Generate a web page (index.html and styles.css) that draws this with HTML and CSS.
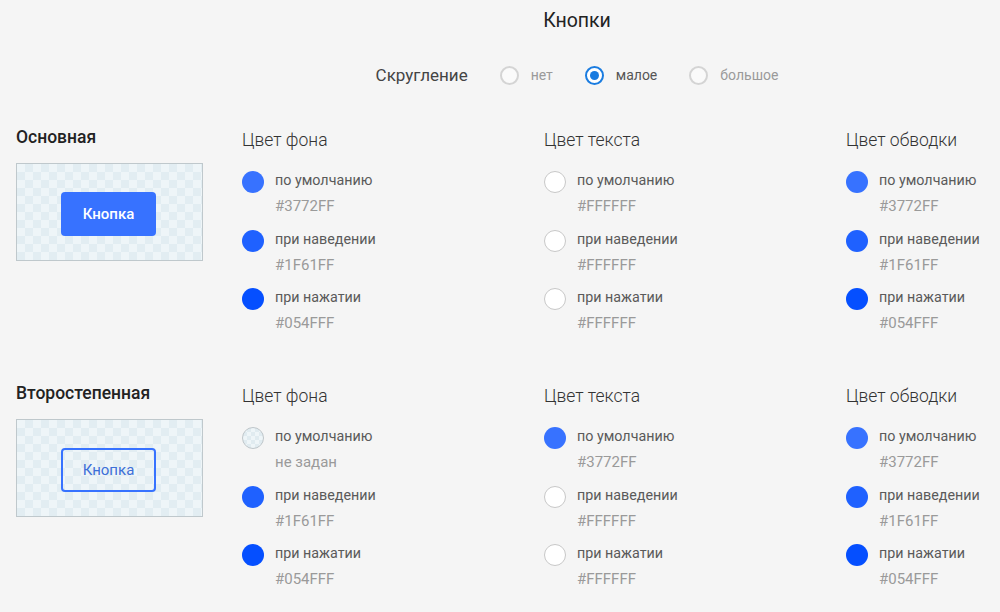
FILE: index.html
```html
<!DOCTYPE html>
<html lang="ru">
<head>
<meta charset="utf-8">
<link rel="stylesheet" href="styles.css">
</head>
<body>
<div class="page">
  <header class="header">
    <h1 class="title">Кнопки</h1>
    <div class="rounding">
      <span class="rounding-label">Скругление</span>
      <label class="radio"><span class="radio-dot"></span><span class="radio-text">нет</span></label>
      <label class="radio radio-on"><span class="radio-dot"></span><span class="radio-text">малое</span></label>
      <label class="radio"><span class="radio-dot"></span><span class="radio-text">большое</span></label>
    </div>
  </header>

  <section class="section">
    <div class="preview-col">
      <h2 class="section-title">Основная</h2>
      <div class="preview">
        <span class="btn btn-primary">Кнопка</span>
      </div>
    </div>
    <div class="cols">
      <div class="col">
        <h3 class="col-title">Цвет фона</h3>
        <div class="item"><span class="sw c1"></span><div><div class="lbl">по умолчанию</div><div class="val">#3772FF</div></div></div>
        <div class="item"><span class="sw c2"></span><div><div class="lbl">при наведении</div><div class="val">#1F61FF</div></div></div>
        <div class="item"><span class="sw c3"></span><div><div class="lbl">при нажатии</div><div class="val">#054FFF</div></div></div>
      </div>
      <div class="col">
        <h3 class="col-title">Цвет текста</h3>
        <div class="item"><span class="sw cw"></span><div><div class="lbl">по умолчанию</div><div class="val">#FFFFFF</div></div></div>
        <div class="item"><span class="sw cw"></span><div><div class="lbl">при наведении</div><div class="val">#FFFFFF</div></div></div>
        <div class="item"><span class="sw cw"></span><div><div class="lbl">при нажатии</div><div class="val">#FFFFFF</div></div></div>
      </div>
      <div class="col">
        <h3 class="col-title">Цвет обводки</h3>
        <div class="item"><span class="sw c1"></span><div><div class="lbl">по умолчанию</div><div class="val">#3772FF</div></div></div>
        <div class="item"><span class="sw c2"></span><div><div class="lbl">при наведении</div><div class="val">#1F61FF</div></div></div>
        <div class="item"><span class="sw c3"></span><div><div class="lbl">при нажатии</div><div class="val">#054FFF</div></div></div>
      </div>
    </div>
  </section>

  <section class="section">
    <div class="preview-col">
      <h2 class="section-title">Второстепенная</h2>
      <div class="preview">
        <span class="btn btn-secondary">Кнопка</span>
      </div>
    </div>
    <div class="cols">
      <div class="col">
        <h3 class="col-title">Цвет фона</h3>
        <div class="item"><span class="sw cnone"></span><div><div class="lbl">по умолчанию</div><div class="val">не задан</div></div></div>
        <div class="item"><span class="sw c2"></span><div><div class="lbl">при наведении</div><div class="val">#1F61FF</div></div></div>
        <div class="item"><span class="sw c3"></span><div><div class="lbl">при нажатии</div><div class="val">#054FFF</div></div></div>
      </div>
      <div class="col">
        <h3 class="col-title">Цвет текста</h3>
        <div class="item"><span class="sw c1"></span><div><div class="lbl">по умолчанию</div><div class="val">#3772FF</div></div></div>
        <div class="item"><span class="sw cw"></span><div><div class="lbl">при наведении</div><div class="val">#FFFFFF</div></div></div>
        <div class="item"><span class="sw cw"></span><div><div class="lbl">при нажатии</div><div class="val">#FFFFFF</div></div></div>
      </div>
      <div class="col">
        <h3 class="col-title">Цвет обводки</h3>
        <div class="item"><span class="sw c1"></span><div><div class="lbl">по умолчанию</div><div class="val">#3772FF</div></div></div>
        <div class="item"><span class="sw c2"></span><div><div class="lbl">при наведении</div><div class="val">#1F61FF</div></div></div>
        <div class="item"><span class="sw c3"></span><div><div class="lbl">при нажатии</div><div class="val">#054FFF</div></div></div>
      </div>
    </div>
  </section>
</div>
</body>
</html>
```

FILE: styles.css
```css
* { box-sizing: border-box; }
html, body { margin: 0; padding: 0; }
body {
  background: #f5f5f5;
  font-family: Roboto, "Liberation Sans", Arial, sans-serif;
  color: #333;
  width: 1000px;
  height: 612px;
  overflow: hidden;
}
.page { padding-top: 9px; }

.header {
  padding-left: 154px;
  display: flex;
  flex-direction: column;
  align-items: center;
}
.title {
  margin: 0;
  font-size: 19.5px;
  line-height: 24px;
  font-weight: 400;
  color: #222;
}
.rounding {
  margin-top: 30px;
  display: flex;
  align-items: center;
  height: 24px;
}
.rounding-label {
  font-size: 17px;
  color: #444;
  margin-right: 32px;
}
.radio {
  display: flex;
  align-items: center;
  margin-right: 32px;
}
.radio:last-child { margin-right: 0; }
.radio-dot {
  width: 19px;
  height: 19px;
  border-radius: 50%;
  border: 2px solid #d4d4d4;
  background: #fafafa;
  margin-right: 12px;
  position: relative;
}
.radio-text {
  font-size: 14px;
  color: #9a9a9a;
}
.radio-on .radio-dot {
  border-color: #1a7ce0;
  background: #fff;
}
.radio-on .radio-dot::after {
  content: "";
  position: absolute;
  left: 3px;
  top: 3px;
  width: 9px;
  height: 9px;
  border-radius: 50%;
  background: #1a7ce0;
}
.radio-on .radio-text { color: #555; }

.section {
  display: flex;
  align-items: flex-start;
  margin-top: 39px;
}
.section + .section { margin-top: 46px; }
.preview-col {
  width: 242px;
  padding-left: 16px;
}
.section-title {
  margin: 0;
  font-size: 17.5px;
  line-height: 22px;
  font-weight: 500;
  color: #222;
}
.preview {
  margin-top: 15px;
  width: 187px;
  height: 98px;
  border: 1px solid #bfc8cc;
  background-color: #eef5f8;
  background-image: conic-gradient(#e2edf2 25%, transparent 0 50%, #e2edf2 0 75%, transparent 0);
  background-size: 16px 16px;
  display: flex;
  align-items: center;
  justify-content: center;
}
.btn {
  width: 95px;
  height: 44px;
  border-radius: 4px;
  display: flex;
  align-items: center;
  justify-content: center;
  font-size: 15px;
  margin-left: -2px;
  margin-top: 3px;
}
.btn-primary {
  background: #3772ff;
  color: #fff;
  font-weight: 500;
}
.btn-secondary {
  border: 2px solid #3772ff;
  color: #3d6fd8;
}

.cols {
  display: grid;
  grid-template-columns: 302px 302px 1fr;
}
.col-title {
  margin: 2px 0 0;
  font-size: 17.5px;
  line-height: 24px;
  font-weight: 300;
  color: #333;
}
.item {
  display: flex;
  align-items: flex-start;
  margin-top: 8.5px;
}
.col-title + .item { margin-top: 17px; }
.sw {
  width: 22px;
  height: 22px;
  border-radius: 50%;
  flex: none;
  margin-top: 2px;
  margin-right: 11px;
}
.c1 { background: #3772ff; }
.c2 { background: #1f61ff; }
.c3 { background: #054fff; }
.cw { background: #fff; border: 1px solid #c8c8c8; }
.cnone {
  border: 1px solid #bfc6ca;
  background-color: #eef5f8;
  background-image: conic-gradient(#e0ebf0 25%, transparent 0 50%, #e0ebf0 0 75%, transparent 0);
  background-size: 8px 8px;
}
.lbl {
  font-size: 14.3px;
  line-height: 26px;
  color: #5a5a5a;
  margin-top: -2px;
}
.val {
  font-size: 15px;
  line-height: 26px;
  color: #9a9a9a;
}
```
